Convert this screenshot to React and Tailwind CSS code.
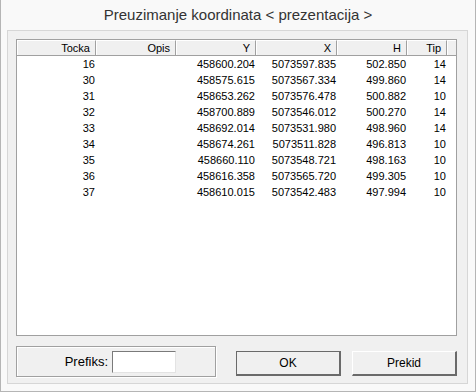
const cols = [
  { key: "tocka", label: "Tocka", w: "w-[79px]" },
  { key: "opis", label: "Opis", w: "w-[80px]" },
  { key: "y", label: "Y", w: "w-[80px]" },
  { key: "x", label: "X", w: "w-[81px]" },
  { key: "h", label: "H", w: "w-[70px]" },
  { key: "tip", label: "Tip", w: "w-[40px]" },
]

const rows = [
  ["16", "", "458600.204", "5073597.835", "502.850", "14"],
  ["30", "", "458575.615", "5073567.334", "499.860", "14"],
  ["31", "", "458653.262", "5073576.478", "500.882", "10"],
  ["32", "", "458700.889", "5073546.012", "500.270", "14"],
  ["33", "", "458692.014", "5073531.980", "498.960", "14"],
  ["34", "", "458674.261", "5073511.828", "496.813", "10"],
  ["35", "", "458660.110", "5073548.721", "498.163", "10"],
  ["36", "", "458616.358", "5073565.720", "499.305", "10"],
  ["37", "", "458610.015", "5073542.483", "497.994", "10"],
]

const font = { fontFamily: '"Liberation Sans", Arial, sans-serif' }

export default function App() {
  return (
    <div
      className="w-[476px] h-[392px] bg-[#f9f9f9] border-l border-r border-b border-[#b5b5b5] flex flex-col"
      style={font}
    >
      {/* title */}
      <div className="h-[30px] flex items-center justify-center text-[15px] text-[#333] pt-[1px]">
        Preuzimanje koordinata &lt; prezentacija &gt;
      </div>

      {/* panel */}
      <div className="ml-[6px] w-[461px] h-[354px] border border-[#d6d6d6] bg-[#f0f0f0] pl-[8px] pt-[8px]">
        {/* list */}
        <div className="w-[441px] h-[297px] border border-[#a0a0a0] bg-white text-[11px] text-black">
          <div className="flex h-[16px] border-b border-[#a0a0a0] bg-[#f0f0f0]">
            {cols.map((c) => (
              <div
                key={c.key}
                className={`${c.w} h-full border-t border-l border-t-white border-l-white border-r border-r-[#a0a0a0] flex items-center justify-end pr-[5px] leading-none`}
              >
                {c.label}
              </div>
            ))}
            <div className="flex-1 h-full border-t border-l border-white" />
          </div>
          {rows.map((r, i) => (
            <div key={i} className="flex h-[16px] items-center leading-none">
              {r.map((v, j) => (
                <div key={j} className={`${cols[j].w} text-right pr-[1px]`}>
                  {v}
                </div>
              ))}
            </div>
          ))}
        </div>

        {/* bottom */}
        <div className="flex items-start mt-[10px]">
          <div className="w-[200px] h-[31px] border border-[#a0a0a0] shadow-[inset_1px_1px_0_#fff,1px_1px_0_#fff] flex items-center justify-end pr-[39px] text-[13px] text-black">
            <span className="mr-[4px]">Prefiks:</span>
            <div className="w-[64px] h-[22px] bg-white border border-t-[#7a7a7a] border-l-[#7a7a7a] border-r-[#e3e3e3] border-b-[#e3e3e3]" />
          </div>
          <div className="ml-[20px] mt-[5px] w-[105px] h-[25px] border border-[#6a6a6a] border-b-2 border-r-2 bg-[#f0f0f0] flex items-center justify-center text-[12px] text-black">
            OK
          </div>
          <div className="ml-[11px] mt-[5px] w-[105px] h-[25px] border border-t-white border-l-white border-b-2 border-r-2 border-b-[#6a6a6a] border-r-[#6a6a6a] bg-[#f0f0f0] flex items-center justify-center text-[12px] text-black">
            Prekid
          </div>
        </div>
      </div>
    </div>
  )
}
